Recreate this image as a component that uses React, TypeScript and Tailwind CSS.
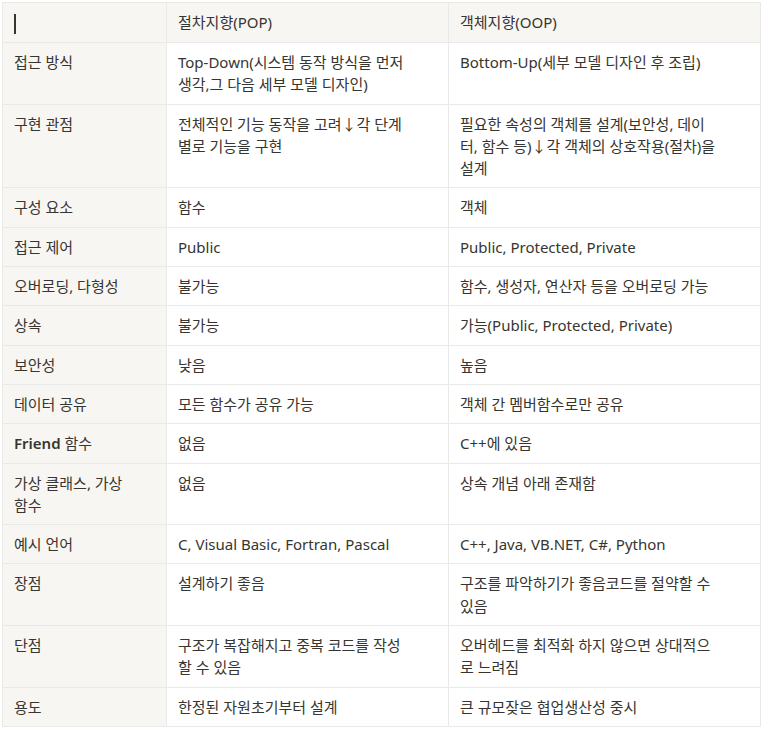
import React from 'react';

type Row = { label: React.ReactNode; pop: React.ReactNode; oop: React.ReactNode };

const rows: Row[] = [
  {
    label: '접근 방식',
    pop: <>Top-Down(시스템 동작 방식을 먼저<br />생각,그 다음 세부 모델 디자인)</>,
    oop: 'Bottom-Up(세부 모델 디자인 후 조립)',
  },
  {
    label: '구현 관점',
    pop: <>전체적인 기능 동작을 고려↓각 단계<br />별로 기능을 구현</>,
    oop: <>필요한 속성의 객체를 설계(보안성, 데이<br />터, 함수 등)↓각 객체의 상호작용(절차)을<br />설계</>,
  },
  { label: '구성 요소', pop: '함수', oop: '객체' },
  { label: '접근 제어', pop: 'Public', oop: 'Public, Protected, Private' },
  { label: '오버로딩, 다형성', pop: '불가능', oop: '함수, 생성자, 연산자 등을 오버로딩 가능' },
  { label: '상속', pop: '불가능', oop: '가능(Public, Protected, Private)' },
  { label: '보안성', pop: '낮음', oop: '높음' },
  { label: '데이터 공유', pop: '모든 함수가 공유 가능', oop: '객체 간 멤버함수로만 공유' },
  {
    label: <><span className="font-semibold">Friend</span> 함수</>,
    pop: '없음',
    oop: 'C++에 있음',
  },
  { label: <>가상 클래스, 가상<br />함수</>, pop: '없음', oop: '상속 개념 아래 존재함' },
  { label: '예시 언어', pop: 'C, Visual Basic, Fortran, Pascal', oop: 'C++, Java, VB.NET, C#, Python' },
  { label: '장점', pop: '설계하기 좋음', oop: <>구조를 파악하기가 좋음코드를 절약할 수<br />있음</> },
  {
    label: '단점',
    pop: <>구조가 복잡해지고 중복 코드를 작성<br />할 수 있음</>,
    oop: <>오버헤드를 최적화 하지 않으면 상대적으<br />로 느려짐</>,
  },
  { label: '용도', pop: '한정된 자원초기부터 설계', oop: '큰 규모잦은 협업생산성 중시' },
];

const cell = 'border border-[#e9e9e7] pl-[11px] pr-3 py-2 align-top text-left font-normal';

export default function App() {
  return (
    <div
      className="p-[2px] bg-white text-[#37352f] text-[15px] leading-[22.3px]"
      style={{ fontFamily: '"Noto Sans", "Noto Sans CJK KR", sans-serif' }}
    >
      <table className="table-fixed border-collapse w-[758px]">
        <colgroup>
          <col className="w-[164px]" />
          <col className="w-[282px]" />
          <col className="w-[312px]" />
        </colgroup>
        <thead>
          <tr className="bg-[#f7f6f3]">
            <th className={cell}>
              <span className="inline-block w-[1.5px] h-[20px] bg-[#37352f] align-middle"></span>
            </th>
            <th className={cell}>절차지향(POP)</th>
            <th className={cell}>객체지향(OOP)</th>
          </tr>
        </thead>
        <tbody>
          {rows.map((r, i) => (
            <tr key={i}>
              <td className={`${cell} bg-[#f7f6f3]`}>{r.label}</td>
              <td className={cell}>{r.pop}</td>
              <td className={cell}>{r.oop}</td>
            </tr>
          ))}
        </tbody>
      </table>
    </div>
  );
}
